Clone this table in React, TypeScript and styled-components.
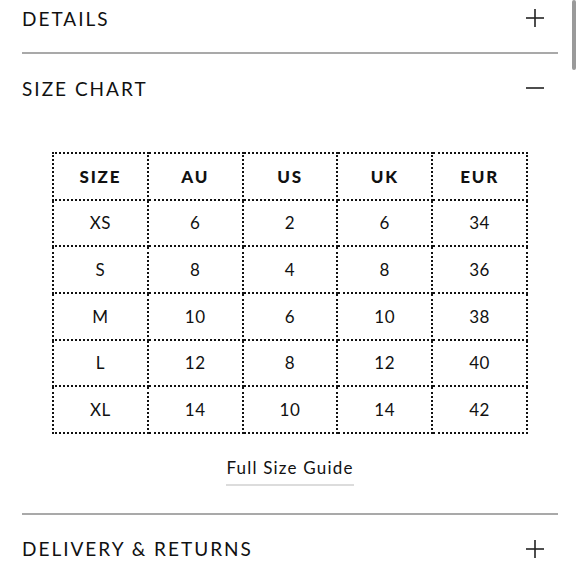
import React from 'react';
import styled, { createGlobalStyle } from 'styled-components';

const GlobalStyle = createGlobalStyle`
  html, body {
    margin: 0;
    padding: 0;
    background: #fff;
    overflow: hidden;
  }
  body {
    font-family: Lato, "Open Sans", sans-serif;
    color: #111;
  }
`;

const Page = styled.div`
  position: relative;
  width: 580px;
  height: 580px;
  overflow: hidden;
`;

const Accordion = styled.div`
  margin-top: -16px;
  padding: 0 22px;
`;

const Section = styled.section<{ $last?: boolean }>`
  border-bottom: ${(p) => (p.$last ? 'none' : '2px solid #a9a9a9')};
`;

const Header = styled.div`
  height: 68px;
  display: flex;
  align-items: center;
  justify-content: space-between;
`;

const Title = styled.h3`
  margin: 0;
  font-size: 19px;
  font-weight: 400;
  letter-spacing: 2px;
  color: #111;
`;

const Toggle = styled.span`
  display: flex;
  width: 20px;
  height: 20px;
  margin-right: 13px;
  color: #222;
`;

const Body = styled.div`
  padding: 30px 0 27px;
  display: flex;
  flex-direction: column;
  align-items: center;
`;

const Table = styled.table`
  width: 476px;
  border-collapse: collapse;
  table-layout: fixed;
  border: 2px dotted #111;
`;

const Cell = styled.td<{ $head?: boolean }>`
  height: 44.67px;
  padding: 0;
  border: 2px dotted #111;
  text-align: center;
  font-size: 17px;
  font-weight: ${(p) => (p.$head ? 900 : 400)};
  letter-spacing: ${(p) => (p.$head ? '1.8px' : '0.6px')};
  color: #111;
`;

const GuideLink = styled.a`
  margin-top: 23px;
  padding-bottom: 6px;
  border-bottom: 2px solid #dcdcdc;
  font-size: 17px;
  letter-spacing: 1.2px;
  color: #111;
  text-decoration: none;
`;

const Scrollbar = styled.div`
  position: absolute;
  top: 0;
  right: 4px;
  width: 4px;
  height: 70px;
  border-radius: 2px;
  background: #9a9a9a;
`;

const Icon: React.FC<{ open?: boolean }> = ({ open }) => (
  <Toggle>
    <svg width="20" height="20" viewBox="0 0 20 20" fill="none" stroke="currentColor" strokeWidth="1.6">
      <line x1="1" y1="10" x2="19" y2="10" />
      {!open && <line x1="10" y1="1" x2="10" y2="19" />}
    </svg>
  </Toggle>
);

const head = ['SIZE', 'AU', 'US', 'UK', 'EUR'];
const rows = [
  ['XS', '6', '2', '6', '34'],
  ['S', '8', '4', '8', '36'],
  ['M', '10', '6', '10', '38'],
  ['L', '12', '8', '12', '40'],
  ['XL', '14', '10', '14', '42'],
];

export default function App() {
  return (
    <Page>
      <GlobalStyle />
      <Accordion>
        <Section>
          <Header>
            <Title>DETAILS</Title>
            <Icon />
          </Header>
        </Section>
        <Section>
          <Header>
            <Title>SIZE CHART</Title>
            <Icon open />
          </Header>
          <Body>
            <Table>
              <thead>
                <tr>
                  {head.map((h) => (
                    <Cell as="th" $head key={h}>{h}</Cell>
                  ))}
                </tr>
              </thead>
              <tbody>
                {rows.map((r) => (
                  <tr key={r[0]}>
                    {r.map((c, i) => (
                      <Cell key={i}>{c}</Cell>
                    ))}
                  </tr>
                ))}
              </tbody>
            </Table>
            <GuideLink href="#">Full Size Guide</GuideLink>
          </Body>
        </Section>
        <Section $last>
          <Header>
            <Title>DELIVERY &amp; RETURNS</Title>
            <Icon />
          </Header>
        </Section>
      </Accordion>
      <Scrollbar />
    </Page>
  );
}
